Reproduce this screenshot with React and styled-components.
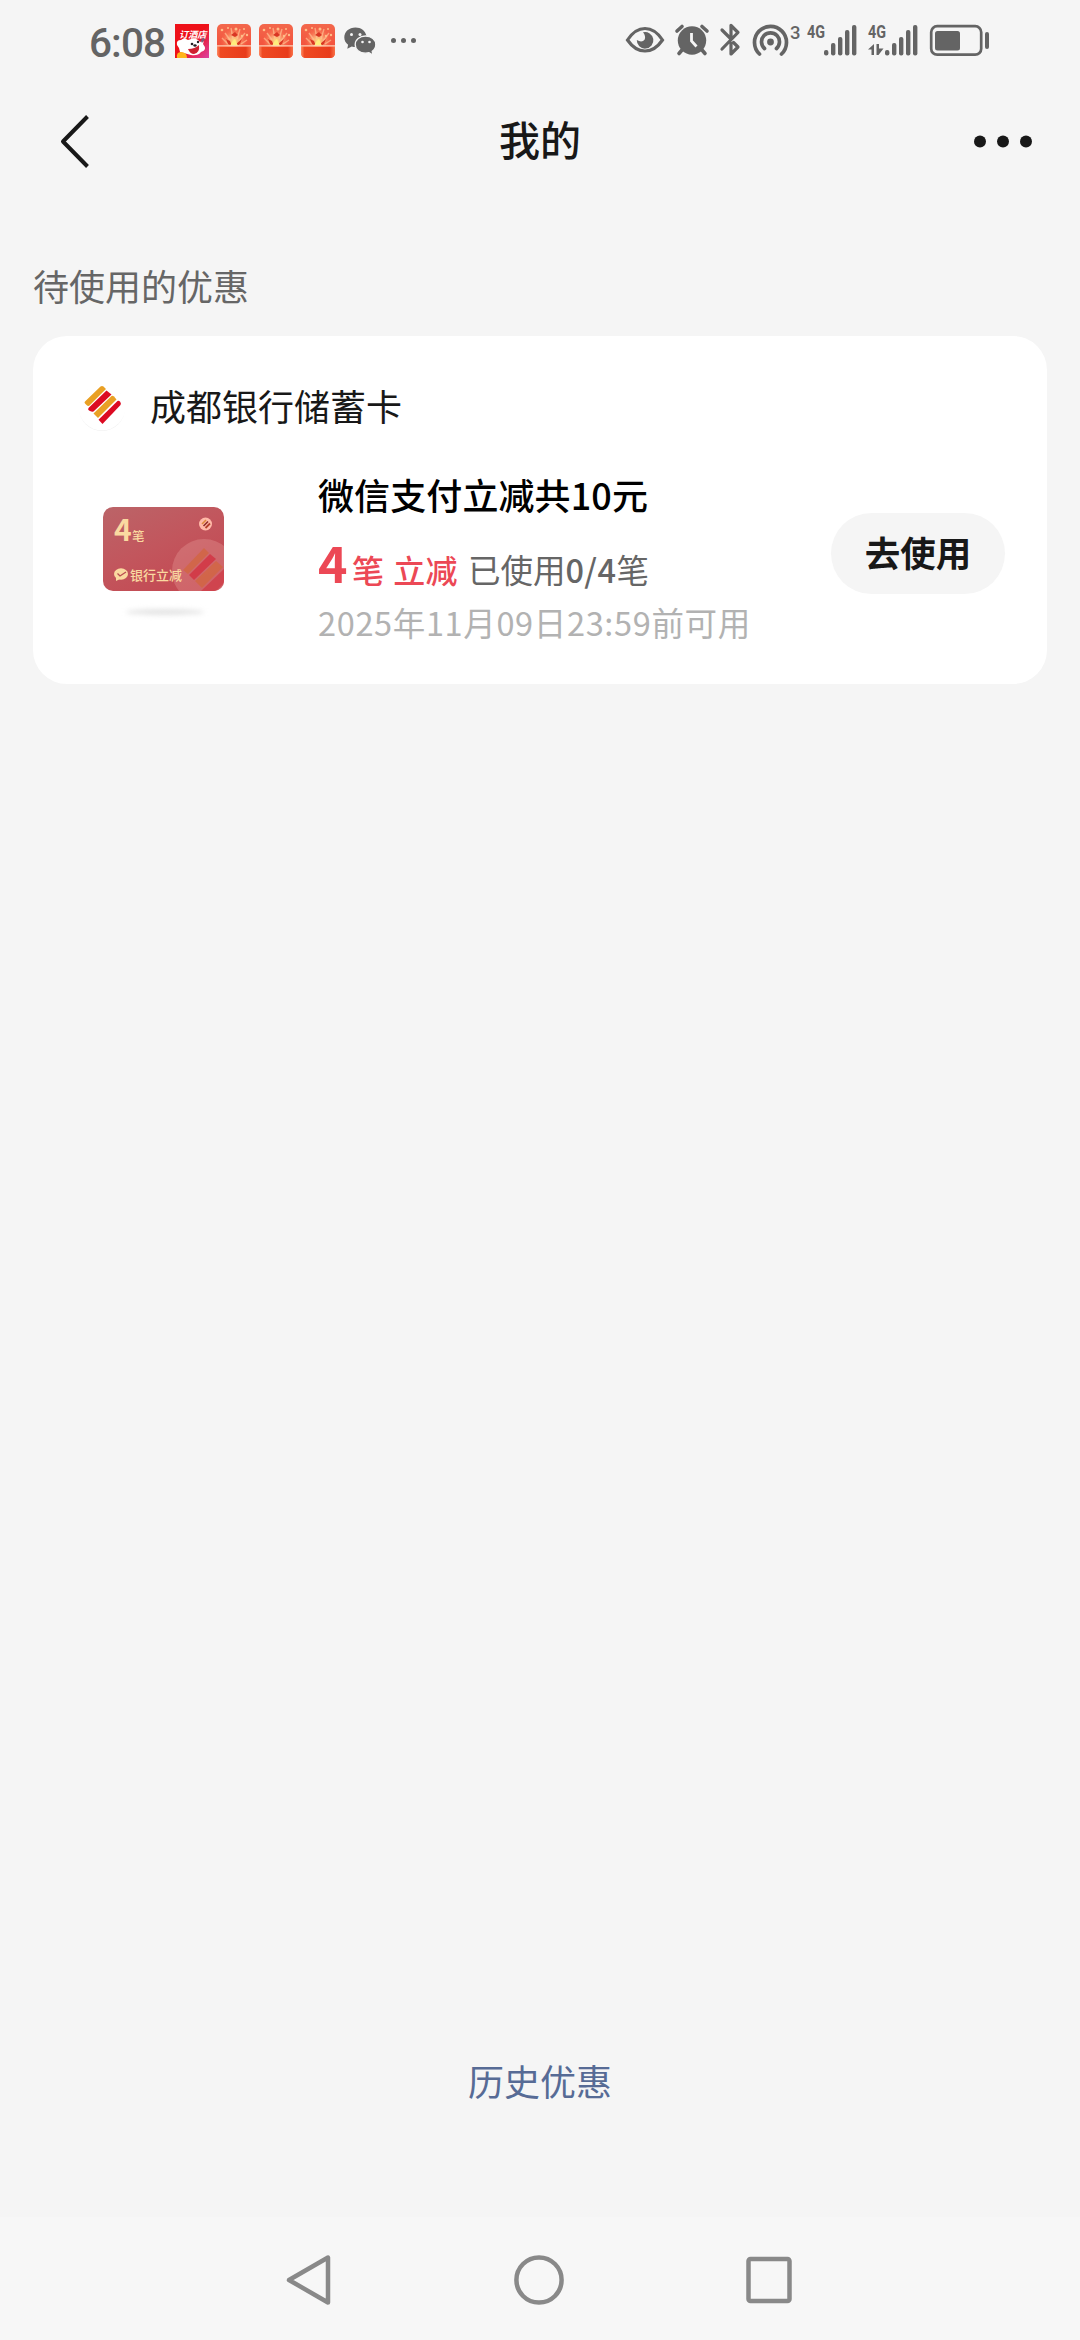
import React from 'react';
import styled, { createGlobalStyle } from 'styled-components';

const Global = createGlobalStyle`
  * { box-sizing: border-box; }
  body { margin: 0; background: #f5f5f5; font-family: "Noto Sans CJK SC", "Noto Sans", sans-serif; }
  svg { display: block; flex: none; }
`;

const Screen = styled.div`
  width: 1080px;
  height: 2340px;
  display: flex;
  flex-direction: column;
  background: #f5f5f5;
  overflow: hidden;
`;

const StatusBar = styled.header`
  height: 82px;
  display: flex;
  justify-content: space-between;
  padding: 0 91px 0 89px;
  color: #646464;
`;

const StatusGroup = styled.div`
  display: flex;
  height: 82px;
`;

const Clock = styled.time`
  width: 86px;
  font: 500 40.5px/40px Roboto, sans-serif;
  letter-spacing: -0.9px;
  padding-top: 23px;
  white-space: nowrap;
`;

const AppIcons = styled.div`
  display: flex;
  gap: 8px;
  padding-top: 24px;
`;

const NavBar = styled.nav`
  height: 118px;
  display: grid;
  grid-template-columns: 1fr auto 1fr;
  align-items: center;
  padding: 0 48px;
`;

const BackButton = styled.div`
  padding-left: 10px;
`;

const NavTitle = styled.h1`
  margin: -7px 0 0;
  font-size: 41px;
  line-height: 60px;
  font-weight: 500;
  color: #181818;
`;

const NavEnd = styled.div`
  display: flex;
  justify-content: flex-end;
`;

const Main = styled.main`
  flex: 1;
  display: flex;
  flex-direction: column;
  padding: 60px 33px 110px;
`;

const SectionTitle = styled.h2`
  margin: 0;
  height: 76px;
  font-size: 36px;
  line-height: 50px;
  font-weight: 400;
  color: #666;
`;

const Card = styled.section`
  height: 348px;
  border-radius: 34px;
  background: #fff;
  padding: 47px 42px 0 45px;
`;

const BankRow = styled.div`
  display: flex;
  align-items: center;
  height: 48px;
  gap: 24px;
`;

const BankName = styled.span`
  font-size: 36px;
  line-height: 48px;
  color: #181818;
  margin-top: -4px;
`;

const Offer = styled.div`
  display: flex;
  align-items: flex-start;
`;

const Voucher = styled.div`
  width: 240px;
  padding: 76px 0 0 25px;
`;

const VoucherFace = styled.div`
  position: relative;
  width: 121px;
  height: 84px;
  border-radius: 10px;
  overflow: hidden;
  background: linear-gradient(155deg, #bb6468 0%, #c2565d 45%, #c4454f 100%);
  padding: 9px 10px 8px 11px;
  display: flex;
  flex-direction: column;
  justify-content: space-between;
  color: #fad9a0;
`;

const FaceArt = styled.svg`
  position: absolute;
  inset: 0;
`;

const FaceCount = styled.div`
  position: relative;
  display: flex;
  align-items: baseline;
  height: 25px;
  line-height: 25px;
  font-size: 12.5px;
  font-weight: 500;
`;

const FaceDigit = styled.b`
  font: 700 30px/25px "Noto Sans CJK SC", sans-serif;
  width: 18px;
`;

const FaceLabel = styled.div`
  position: relative;
  display: flex;
  align-items: center;
  gap: 2px;
  height: 17px;
  font-size: 13px;
  line-height: 17px;
  font-weight: 500;
  white-space: nowrap;
`;

const VoucherShadow = styled.div`
  width: 78px;
  height: 6px;
  margin: 18px 0 0 23px;
  border-radius: 50%;
  background: #e4e4e4;
  filter: blur(2.5px);
`;

const Details = styled.div`
  width: 513px;
  padding-top: 36px;
  white-space: nowrap;
`;

const OfferTitle = styled.h3`
  margin: 0;
  font-size: 36px;
  line-height: 54px;
  font-weight: 500;
  color: #000;
  letter-spacing: 0.1px;
`;

const Benefit = styled.div`
  display: flex;
  align-items: baseline;
  height: 80px;
  line-height: 80px;
  font-size: 32px;
  color: #ec4855;
`;

const Count = styled.b`
  font: 700 50px/80px "Noto Sans CJK SC", sans-serif;
  width: 34px;
`;

const Unit = styled.span`
  font-weight: 500;
  letter-spacing: 0.3px;
  margin-right: 9px;
`;

const Used = styled.span`
  color: #666;
  font-size: 32.5px;
  margin-left: 1px;
`;

const Digits = styled.span`
  font-weight: ${(p) => p.$weight || 400};
  letter-spacing: 0.4px;
`;

const Expiry = styled.div`
  font-size: 32.5px;
  line-height: 40px;
  padding-top: 1px;
  color: #b2b2b2;
  letter-spacing: 0.65px;
`;

const UseButton = styled.button`
  width: 174px;
  height: 81px;
  margin-top: 82px;
  padding: 0 0 3px;
  border: 0;
  border-radius: 41px;
  background: #f5f5f5;
  color: #181818;
  font: 700 35.5px/50px "Noto Sans CJK SC", sans-serif;
`;

const HistoryLink = styled.a`
  margin-top: auto;
  align-self: center;
  font-size: 36px;
  line-height: 54px;
  color: #576b95;
`;

const SystemBar = styled.footer`
  height: 123px;
  display: flex;
  justify-content: space-between;
  align-items: center;
  padding: 2px 286px 0 284px;
  background: #f7f7f7;
`;

function HotelIcon() {
  return (
    <svg width="34" height="34" viewBox="0 0 34 34">
      <defs>
        <linearGradient id="hotel" x1="0" y1="0" x2="1" y2="1">
          <stop offset=".5" stopColor="#ee1119" />
          <stop offset="1" stopColor="#dc42a4" />
        </linearGradient>
      </defs>
      <rect width="34" height="34" fill="url(#hotel)" />
      <text x="4" y="14" fontSize="9.2" fontWeight="700" fontStyle="italic" fill="#fff">订酒店</text>
      <path d="M2 21Q1 16 6 16Q9 13 13 16Q21 12 25 18Q30 15 28 20Q33 26 26 28Q23 32 16 31L5 28L4 24Z" fill="#fff" />
      <path d="M13 25Q20 25 24 21Q25 29 19 30Q15 30 13 25Z" fill="#cf2030" />
      <circle cx="17" cy="20" r="1.3" fill="#252025" />
      <circle cx="23" cy="18" r="1.2" fill="#252025" />
      <ellipse cx="20" cy="21.500" rx="1.7" ry="1.2" fill="#252025" />
      <path d="M26 17Q27 12 30 15L27 19Z" fill="#765f7b" />
      <path d="M2 34Q1 28 6 28Q12 28 12 34Z" fill="#ffb51c" />
    </svg>
  );
}

function GiftIcon({ id }) {
  return (
    <svg width="34" height="34" viewBox="0 0 34 34">
      <defs>
        <linearGradient id={id} x1="0" y1="0" x2="0" y2="1">
          <stop stopColor="#f3684c" />
          <stop offset="1" stopColor="#f34735" />
        </linearGradient>
        <radialGradient id={id + 'glow'}>
          <stop stopColor="#ffe080" />
          <stop offset=".4" stopColor="#fba070" />
          <stop offset="1" stopColor="#f85a40" stopOpacity="0" />
        </radialGradient>
        <linearGradient id={id + 'box'}>
          <stop stopColor="#ff8b63" />
          <stop offset=".1" stopColor="#ef4a22" />
          <stop offset=".85" stopColor="#e83c1c" />
          <stop offset="1" stopColor="#fa7248" />
        </linearGradient>
      </defs>
      <rect width="34" height="34" rx="5" fill={`url(#${id})`} />
      <circle cx="17" cy="17" r="14" fill={`url(#${id}glow)`} />
      <path d="M13 16L8 9M16 15L14 4M20 15L23 5M22 17L28 9M11 20L5 14M24 20L30 16" stroke="#ffc798" strokeWidth="1.4" opacity=".65" />
      <g fill="#ffbd88">
        <circle cx="5" cy="6" r="1.300" /><circle cx="11" cy="4" r="1" /><circle cx="19" cy="5" r="1.500" />
        <circle cx="27" cy="5" r="1" /><circle cx="30" cy="11" r="1.200" /><circle cx="25" cy="12" r="1.200" />
      </g>
      <path d="M9 15L13 17L15 22L11 20ZM19 20L25 15L23 20L20 22ZM14 11L18 8L21 11L18 13Z" fill="#d93624" />
      <path d="M13 22L15 18L18 15L21 22Z" fill="#ffed7c" />
      <path d="M0 22.500H34V29Q34 34 29 34H5Q0 34 0 29Z" fill={`url(#${id}box)`} />
      <path d="M0 21.800H34" stroke="#ffd0b4" strokeWidth="1.200" />
    </svg>
  );
}

function ChatIcon() {
  return (
    <svg width="78" height="34" viewBox="0 0 78 34" fill="#646464">
      <path d="M12.500 3.500C6 3.500 1.300 7.700 1.300 13.500c0 3.200 1.500 5.500 3.800 7.200L4.300 24.800l4.500-2.300c1.300.4 2.500.5 4 .5h10.500L23.500 12C22.500 6.800 18 3.500 12.500 3.500Z" />
      <path d="M22.500 12c-6 0-10.300 3.700-10.300 8.600s4.300 8.600 10.300 8.600c1.300 0 2.500-.2 3.500-.5l4 2.300-.8-3.600c2.300-1.500 3.600-3.900 3.600-6.800 0-4.900-4.300-8.600-10.300-8.600Z" stroke="#f5f5f5" strokeWidth="1.300" />
      <g fill="#f5f5f5"><circle cx="8.500" cy="10.500" r="1.500" /><circle cx="17" cy="10.500" r="1.500" /><circle cx="19.500" cy="18" r="1.300" /><circle cx="26.500" cy="18" r="1.300" /></g>
      <circle cx="50.500" cy="16.500" r="2.500" /><circle cx="60.500" cy="16.500" r="2.500" /><circle cx="70.500" cy="16.500" r="2.500" />
    </svg>
  );
}

function DeviceIcons() {
  return (
    <svg width="180" height="82" viewBox="624 0 180 82" fill="none" stroke="#646464" strokeWidth="3.200">
      <path d="M627.500 40Q635 28.500 645 28.500T662.500 40Q655 51 645 51T627.500 40Z" />
      <path d="M643 32.300A8.300 8.300 0 1 1 636.800 40Q642 43 644.700 39.500Q646 36 643 32.300Z" fill="#646464" stroke="none" />
      <circle cx="692" cy="40.500" r="14.200" fill="#646464" stroke="none" />
      <path d="M677 31L682 26.500M702 26.500L707 31M682 50L679 53.500M702 50L705 53.500" strokeWidth="3.600" strokeLinecap="round" />
      <path d="M691.500 33V41L696.500 46.500" stroke="#f5f5f5" strokeWidth="2.800" />
      <path d="M722 30L731 39M722 49L738 32.500L731 25.500V38M731 43V54L738 47L733.500 42.500" strokeWidth="3.200" strokeLinecap="round" strokeLinejoin="round" />
      <circle cx="770.500" cy="42" r="3.400" fill="#646464" stroke="none" />
      <path d="M759.500 54A16 16 0 1 1 781.500 54M764.500 48.500A9 9 0 1 1 776.500 48.500" strokeWidth="3.700" strokeLinecap="round" />
      <text x="790" y="39" fill="#646464" stroke="none" fontFamily="Roboto" fontSize="18.500" fontWeight="500">3</text>
    </svg>
  );
}

function Signal({ arrows }) {
  return (
    <svg width="61" height="82" viewBox="0 0 61 82" fill="#646464">
      <text x="3" y="38" fontFamily="Roboto" fontSize="19" fontWeight="700" textLength="18" lengthAdjust="spacingAndGlyphs">4G</text>
      {[50, 43, 37, 30, 25].map((y, i) => (
        <rect key={y} x={20 + i * 7} y={y} width="4.400" height={55.500 - y} rx="2" />
      ))}
      {arrows && <path d="M9 44V55H6.500V49.500H3ZM11.500 44H14V48.500H18.500L13.500 55H11.500Z" />}
    </svg>
  );
}

function Battery() {
  return (
    <svg width="63" height="82" viewBox="926 0 63 82" fill="#646464">
      <rect x="931.200" y="26.200" width="50" height="28.500" rx="6" fill="none" stroke="#646464" strokeWidth="2.700" />
      <rect x="935" y="31" width="25" height="19.500" rx="2.500" />
      <rect x="985" y="32" width="4" height="17" rx="2" />
    </svg>
  );
}

function BankLogo() {
  return (
    <svg width="48" height="48" viewBox="0 0 48 48">
      <circle cx="24" cy="25" r="23" fill="#efefef" />
      <circle cx="24" cy="24" r="23.500" fill="#fff" />
      <path d="M7 18.500L22.500 3.500Q24 2.500 25.500 3.500L28 6L12 22Q10.500 24 8.500 22L7 20.500Q6 19.500 7 18.500Z" fill="#e9a024" />
      <path d="M10.500 25L28.500 7.500L33.500 11.500L15.500 28.500Q13 29 11 27.500Q9.500 26.500 10.500 25Z" fill="#dc0a22" />
      <path d="M15.500 30.500L33.500 13Q34.500 12.300 36 13.500L38.500 16.500L20 35Z" fill="#e9a024" />
      <path d="M20.500 36.800L39.500 18Q40.500 17.300 42 18.500Q43.500 20.500 42.500 22L24.500 41Z" fill="#dc0a22" />
    </svg>
  );
}

function VoucherArt() {
  return (
    <FaceArt width="121" height="84" viewBox="0 0 121 84">
      <circle cx="101" cy="64" r="32" fill="#f0b1a8" opacity=".28" />
      <path d="M80 63L101 41L106 46L85 67Z" fill="#d2663f" opacity=".75" />
      <path d="M86 68L107 47L113 52L91 73Z" fill="#d23746" opacity=".9" />
      <path d="M92 74L113 54L120 60L99 81Z" fill="#d2663f" opacity=".75" />
      <path d="M98 84L121 62V76L113 84Z" fill="#cf3e4a" opacity=".85" />
      <circle cx="102.500" cy="17" r="6.500" fill="#ffb9a8" />
      <path d="M99 17L103 13" stroke="#dd8a3c" strokeWidth="1.600" />
      <path d="M100.500 19L105 14.500" stroke="#8e2c28" strokeWidth="1.600" />
      <path d="M102.500 21L107 16.500" stroke="#b5402c" strokeWidth="1.800" />
    </FaceArt>
  );
}

export default function App() {
  return (
    <Screen>
      <Global />
      <StatusBar>
        <StatusGroup>
          <Clock>6:08</Clock>
          <AppIcons>
            <HotelIcon />
            <GiftIcon id="giftA" />
            <GiftIcon id="giftB" />
            <GiftIcon id="giftC" />
            <ChatIcon />
          </AppIcons>
        </StatusGroup>
        <StatusGroup>
          <DeviceIcons />
          <Signal />
          <Signal arrows />
          <Battery />
        </StatusGroup>
      </StatusBar>

      <NavBar>
        <BackButton>
          <svg width="34" height="56" viewBox="0 0 34 56" fill="none" stroke="#181818" strokeWidth="4">
            <path d="M29.500 3.500L5 28.500L29.500 53.500" strokeLinejoin="round" />
          </svg>
        </BackButton>
        <NavTitle>我的</NavTitle>
        <NavEnd>
          <svg width="60" height="14" viewBox="0 0 60 14" fill="#181818">
            <circle cx="8" cy="7.500" r="6" /><circle cx="31" cy="7.500" r="6" /><circle cx="54" cy="7.500" r="6" />
          </svg>
        </NavEnd>
      </NavBar>

      <Main>
        <SectionTitle>待使用的优惠</SectionTitle>
        <Card>
          <BankRow>
            <BankLogo />
            <BankName>成都银行储蓄卡</BankName>
          </BankRow>
          <Offer>
            <Voucher>
              <VoucherFace>
                <VoucherArt />
                <FaceCount><FaceDigit>4</FaceDigit>笔</FaceCount>
                <FaceLabel>
                  <svg width="14" height="13" viewBox="0 0 14 13">
                    <ellipse cx="7" cy="6" rx="7" ry="5.800" fill="#fad9a0" />
                    <path d="M2 9V13L6 11Z" fill="#fad9a0" />
                    <path d="M3.500 5.500L6 8L12 4" fill="none" stroke="#b94b50" strokeWidth="1.300" />
                  </svg>
                  银行立减
                </FaceLabel>
              </VoucherFace>
              <VoucherShadow />
            </Voucher>
            <Details>
              <OfferTitle>微信支付立减共10元</OfferTitle>
              <Benefit>
                <Count>4</Count>
                <Unit>笔</Unit>
                <Unit>立减</Unit>
                <Used>已使用<Digits $weight={500}>0/4</Digits>笔</Used>
              </Benefit>
              <Expiry>2025年11月09日23:59前可用</Expiry>
            </Details>
            <UseButton>去使用</UseButton>
          </Offer>
        </Card>
        <HistoryLink>历史优惠</HistoryLink>
      </Main>

      <SystemBar>
        <svg width="50" height="54" viewBox="0 0 50 54" fill="none" stroke="#898989" strokeWidth="4.500" strokeLinejoin="round">
          <path d="M44 4.500V49.500L5 27Z" />
        </svg>
        <svg width="54" height="54" viewBox="0 0 54 54" fill="none" stroke="#898989" strokeWidth="4.500">
          <circle cx="27" cy="27" r="22.600" />
        </svg>
        <svg width="50" height="54" viewBox="0 0 50 54" fill="none" stroke="#898989" strokeWidth="4.500">
          <rect x="4.500" y="6" width="41" height="42" rx="2" />
        </svg>
      </SystemBar>
    </Screen>
  );
}
